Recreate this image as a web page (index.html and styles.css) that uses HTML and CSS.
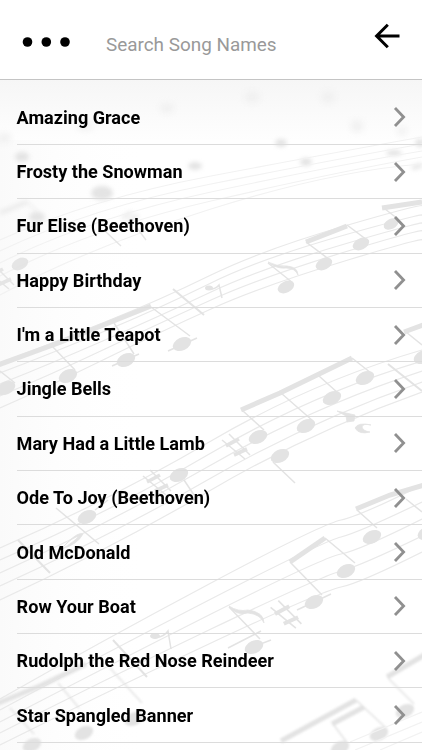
FILE: index.html
```
<!DOCTYPE html>
<html lang="en">
<head>
<meta charset="UTF-8">
<meta name="viewport" content="width=device-width, initial-scale=1.0">
<title>Songs</title>
<link rel="stylesheet" href="styles.css">
</head>
<body>
  <!-- Sheet music behind the list -->
  <svg class="sheet-music" viewBox="0 0 422 750" aria-hidden="true">
    <defs>
      <ellipse id="note" rx="9.8" ry="6.3" transform="rotate(-26)"/>
      <g id="sharp">
        <path class="stem" d="M-14-7L9 12M-7-13L14 8"/>
        <path class="bar" d="M-10-1L3-8M-2 8L11 2"/>
      </g>
      <linearGradient id="shade" x1="0" y1="0" x2="0" y2="1">
        <stop offset="0" stop-color="#f6f6f6"/>
        <stop offset="1" stop-color="#fefefe"/>
      </linearGradient>
      <linearGradient id="side" x1="0" y1="0" x2="1" y2="0">
        <stop offset="0" stop-color="#fafafa"/>
        <stop offset="1" stop-color="#fff" stop-opacity="0"/>
      </linearGradient>
    </defs>
    <rect x="0" y="80" width="422" height="60" fill="url(#shade)"/>
    <rect x="0" y="140" width="150" height="610" fill="url(#side)"/>

    <!-- out of focus notes at the top -->
    <g class="far">
      <ellipse cx="167" cy="108" rx="7" ry="5"/>
      <ellipse cx="252" cy="97" rx="8" ry="6"/>
      <ellipse cx="328" cy="97" rx="7" ry="6"/>
      <ellipse cx="357" cy="126" rx="6" ry="6"/>
      <ellipse cx="402" cy="131" rx="5" ry="4"/>
      <ellipse cx="85" cy="126" rx="8" ry="4"/>
      <ellipse cx="4" cy="138" rx="7" ry="5"/>
    </g>
    <g class="blurred">
      <ellipse cx="281" cy="143" rx="6" ry="4"/>
      <ellipse cx="306" cy="162" rx="6" ry="4"/>
      <ellipse cx="394" cy="153" rx="8" ry="3"/>
      <ellipse cx="420" cy="143" rx="5" ry="4"/>
      <ellipse cx="195" cy="166" rx="7" ry="4"/>
      <ellipse cx="22" cy="157" rx="7" ry="5"/>
      <ellipse cx="102" cy="193" rx="11" ry="7"/>
      <path class="beam" d="M412 168L422 165"/>
      <path class="bar" d="M0 213L27 202"/>
      <path class="stem" d="M27 202L39 214"/>
      <ellipse cx="37" cy="217" rx="8" ry="5"/>
      <path class="bar" d="M122 218L132 212M128 222L138 215"/>
    </g>

    <!-- upper left staff -->
    <g class="staff faint">
      <path d="M0 240Q90 199 211 176T422 137"/>
      <path d="M0 251Q90 208 211 184T422 144"/>
      <path d="M0 263Q90 218 211 192T422 151"/>
      <path d="M0 276Q90 229 211 201T422 157"/>
      <path d="M0 295Q90 247 211 209T422 164"/>
    </g>
    <g class="ink light">
      <use href="#note" transform="translate(20 264) scale(.9)"/>
      <use href="#sharp" x="0" y="277"/>
      <path class="stem" d="M106 232L121 246M137 228L146 240"/>
    </g>

    <!-- staff across the middle -->
    <g class="staff">
      <path d="M0 363Q50 344 105 322T211 275T348 225T422 207"/>
      <path d="M0 373Q50 354 105 331T211 283T348 234T422 216"/>
      <path d="M0 384Q50 364 105 340T211 292T348 243T422 224"/>
      <path d="M0 396Q50 375 105 349T211 300T348 251T422 232"/>
      <path d="M0 408Q50 386 105 359T211 309T348 260T422 241"/>
    </g>
    <g class="ink">
      <path class="beam" d="M-2 365L61 342L151 306"/>
      <path class="stem" d="M0 371L15 383M52 346L75 370M114 323L134 354M151 307L190 336M112 366L139 354M168 351L197 338"/>
      <use href="#note" x="6" y="388"/>
      <use href="#note" x="68" y="376"/>
      <use href="#note" x="126" y="360"/>
      <use href="#note" x="182" y="344"/>
      <path class="bar thin" d="M173 289L204 315"/>
      <ellipse cx="209" cy="288" rx="4" ry="2.5"/>
      <path class="stem" d="M207 289Q215 290 219 285L222 298"/>
      <path class="stem" d="M268 263L293 283"/>
      <path class="flag" d="M268 262Q278 267 287 266Q298 267 298 275Q295 268 286 268Q276 269 268 262"/>
      <use href="#note" transform="translate(286 287) scale(.9)"/>
      <path class="beam" d="M306 242L347 226"/>
      <path class="stem" d="M306 242L330 260M347 225L367 240"/>
      <use href="#note" transform="translate(324 264) scale(.9)"/>
      <use href="#note" transform="translate(361 244) scale(.9)"/>
      <path class="beam" d="M382 208Q402 205 422 202"/>
      <path class="stem" d="M385 209L398 219"/>
      <use href="#note" transform="translate(391 224) scale(.8)"/>
    </g>

    <!-- third staff -->
    <g class="staff">
      <path d="M0 548Q110 500 211 441T422 350"/>
      <path d="M0 560Q110 512 211 453T422 361"/>
      <path d="M0 573Q110 523 211 465T422 371"/>
      <path d="M0 586Q110 536 211 478T422 382"/>
      <path d="M0 600Q110 549 211 490T422 392"/>
    </g>
    <g class="ink">
      <path class="beam" d="M241 410L280 393L352 358"/>
      <path class="stem" d="M243 411L264 430M281 393L313 421M319 376L338 393M352 358L371 373"/>
      <use href="#note" x="258" y="437"/>
      <use href="#note" x="306" y="426"/>
      <use href="#note" x="332" y="398"/>
      <use href="#note" x="365" y="378"/>
      <use href="#note" x="280" y="456"/>
      <path class="stem" d="M273 462L295 483"/>
      <use href="#sharp" x="236" y="447"/>
      <use href="#sharp" x="157" y="483"/>
      <use href="#note" x="179" y="475"/>
      <path class="stem" d="M184 480L194 495"/>
      <use href="#note" x="87" y="517"/>
      <path class="stem" d="M56 508L99 544M95 510L108 500"/>
      <path class="bar thin" d="M18 540L50 573"/>
      <path class="rest" d="M64 546Q78 531 83 534Q78 544 62 549Q74 542 79 536Q74 536 64 546"/>
      <path class="rest" d="M337 411L355 415L354 421L347 422L346 416ZM371 425Q363 423 362 427Q363 431 370 432Q359 435 355 428Q358 422 371 425"/>
      <path class="beam" d="M404 332L426 324"/>
      <path class="stem" d="M406 332L422 345"/>
      <path class="bar thin" d="M388 364L422 391"/>
      <use href="#note" x="423" y="357"/>
    </g>

    <!-- lower staff -->
    <g class="staff">
      <path d="M0 699Q100 642 211 583T341 520T422 485"/>
      <path d="M0 710Q100 656 211 599T341 537T422 502"/>
      <path d="M0 722Q100 670 211 614T341 554T422 519"/>
      <path d="M0 733Q100 682 211 629T341 571T422 536"/>
      <path d="M0 745Q100 695 211 643T341 587T422 552"/>
    </g>
    <g class="ink">
      <path class="beam" d="M356 509L390 495L424 485"/>
      <path class="stem" d="M357 510L377 528M406 499L422 512"/>
      <use href="#note" x="372" y="537"/>
      <use href="#note" x="427" y="533"/>
      <path class="beam" d="M290 562L325 538"/>
      <path class="stem" d="M290 562L322 595M325 538L355 563M297 610L331 594"/>
      <use href="#note" x="346" y="571"/>
      <use href="#note" x="314" y="602"/>
      <path class="stem" d="M229 607L260 639M228 648L261 631M250 648L271 640"/>
      <path class="flag" d="M229 606Q238 612 248 610Q264 612 264 623Q260 614 248 613Q236 616 229 606"/>
      <use href="#note" x="254" y="647"/>
      <use href="#sharp" transform="translate(286 615) scale(1.1)"/>
      <ellipse cx="155" cy="636" rx="5" ry="3"/>
      <path class="stem" d="M155 637Q163 638 168 631L171 649"/>
      <path class="bar thin" d="M113 640L147 677"/>
    </g>

    <!-- near edge, slightly out of focus -->
    <g class="ink near">
      <path class="beam" d="M-4 704L40 686L86 664"/>
      <path class="stem" d="M10 708L34 734M58 683L79 708M110 668L142 703"/>
      <use href="#note" x="134" y="719"/>
      <use href="#note" x="84" y="733"/>
      <use href="#note" x="32" y="745"/>
      <path class="beam" d="M281 741L356 700M332 724L364 707"/>
      <path class="stem" d="M333 724L348 744M356 700L386 728"/>
      <use href="#note" x="379" y="734"/>
      <use href="#note" x="340" y="748"/>
      <path class="beam" d="M387 677L426 654"/>
      <path class="stem" d="M389 679L414 704"/>
      <use href="#note" x="405" y="711"/>
    </g>
    <g class="staff faint">
      <path d="M350 742L422 712M355 750L422 722M380 750L422 732"/>
    </g>
  </svg>

  <div class="page">
    <header class="top-bar">
      <button class="menu-btn" aria-label="Menu">
        <svg width="48" height="12" viewBox="0 0 48 12">
          <circle cx="5.5" cy="6" r="4.8"/>
          <circle cx="24.3" cy="6" r="4.8"/>
          <circle cx="43" cy="6" r="4.8"/>
        </svg>
      </button>
      <input class="search" type="text" placeholder="Search Song Names">
      <button class="back-btn" aria-label="Back">
        <svg width="28" height="28" viewBox="0 0 28 28">
          <path d="M14.8 2.8L3.6 14L14.8 25.2M3.6 14H26.5"/>
        </svg>
      </button>
    </header>

    <ul class="song-list">
      <li class="song"><span>Amazing Grace</span><svg class="chevron" viewBox="0 0 14 20"><path d="M2 1L10.6 10L2 19"/></svg></li>
      <li class="song"><span>Frosty the Snowman</span><svg class="chevron" viewBox="0 0 14 20"><path d="M2 1L10.6 10L2 19"/></svg></li>
      <li class="song"><span>Fur Elise (Beethoven)</span><svg class="chevron" viewBox="0 0 14 20"><path d="M2 1L10.6 10L2 19"/></svg></li>
      <li class="song"><span>Happy Birthday</span><svg class="chevron" viewBox="0 0 14 20"><path d="M2 1L10.6 10L2 19"/></svg></li>
      <li class="song"><span>I'm a Little Teapot</span><svg class="chevron" viewBox="0 0 14 20"><path d="M2 1L10.6 10L2 19"/></svg></li>
      <li class="song"><span>Jingle Bells</span><svg class="chevron" viewBox="0 0 14 20"><path d="M2 1L10.6 10L2 19"/></svg></li>
      <li class="song"><span>Mary Had a Little Lamb</span><svg class="chevron" viewBox="0 0 14 20"><path d="M2 1L10.6 10L2 19"/></svg></li>
      <li class="song"><span>Ode To Joy (Beethoven)</span><svg class="chevron" viewBox="0 0 14 20"><path d="M2 1L10.6 10L2 19"/></svg></li>
      <li class="song"><span>Old McDonald</span><svg class="chevron" viewBox="0 0 14 20"><path d="M2 1L10.6 10L2 19"/></svg></li>
      <li class="song"><span>Row Your Boat</span><svg class="chevron" viewBox="0 0 14 20"><path d="M2 1L10.6 10L2 19"/></svg></li>
      <li class="song"><span>Rudolph the Red Nose Reindeer</span><svg class="chevron" viewBox="0 0 14 20"><path d="M2 1L10.6 10L2 19"/></svg></li>
      <li class="song"><span>Star Spangled Banner</span><svg class="chevron" viewBox="0 0 14 20"><path d="M2 1L10.6 10L2 19"/></svg></li>
    </ul>
  </div>
</body>
</html>
```
FILE: styles.css
```
* {
  box-sizing: border-box;
}

body {
  margin: 0;
  height: 750px;
  overflow: hidden;
  background-color: #fff;
  color: #000;
  font-family: Roboto, "Liberation Sans", sans-serif;
}

/* Background */
.sheet-music {
  position: absolute;
  top: 0;
  left: 0;
  width: 422px;
  height: 750px;
}

.sheet-music path {
  fill: none;
}

.staff {
  stroke: #e9e9e9;
  stroke-width: 1.2;
}

.faint {
  stroke: #f2f2f2;
}

.ink {
  fill: #e3e3e3;
  stroke: #e3e3e3;
  stroke-width: 0;
}

.light {
  opacity: 0.9;
}

.near {
  filter: blur(1.2px);
}

.far {
  fill: #f0f0f0;
  filter: blur(3px);
}

.blurred {
  fill: #e4e4e4;
  stroke: #e9e9e9;
  stroke-width: 0;
  filter: blur(2px);
}

.beam {
  stroke-width: 5;
}

.bar {
  stroke-width: 3.6;
}

.thin {
  stroke-width: 2;
}

.stem {
  stroke-width: 1.5;
}

.sheet-music .flag,
.sheet-music .rest {
  fill: #e3e3e3;
  stroke-width: 0.8;
}

/* Content */
.page {
  position: relative;
}

.top-bar {
  display: flex;
  align-items: flex-start;
  height: 80px;
  padding: 22px 21.5px 0 22px;
  background-color: #fff;
  border-bottom: 1px solid #c4c4c4;
}

.menu-btn,
.back-btn {
  display: block;
  padding: 0;
  border: none;
  background: none;
}

.menu-btn svg,
.back-btn svg {
  display: block;
}

.menu-btn {
  margin-top: 13.5px;
}

.back-btn path {
  fill: none;
  stroke: #000;
  stroke-width: 3;
}

.search {
  flex: 1;
  min-width: 0;
  height: 24px;
  margin: 10px 0 0 36px;
  padding: 0;
  border: none;
  outline: none;
  background: none;
  font-family: inherit;
  font-size: 18.9px;
}

.search::placeholder {
  color: #999;
}

.song-list {
  margin: 0;
  padding: 10.6px 0 0 16.6px;
  list-style: none;
}

.song {
  display: flex;
  align-items: center;
  justify-content: space-between;
  height: 54.35px;
  padding-right: 15.4px;
  border-bottom: 1px solid #dcdcdc;
  font-size: 18.08px;
  font-weight: bold;
}

.chevron {
  width: 14px;
  height: 20px;
}

.chevron path {
  fill: none;
  stroke: #909090;
  stroke-width: 2.8;
}
```
